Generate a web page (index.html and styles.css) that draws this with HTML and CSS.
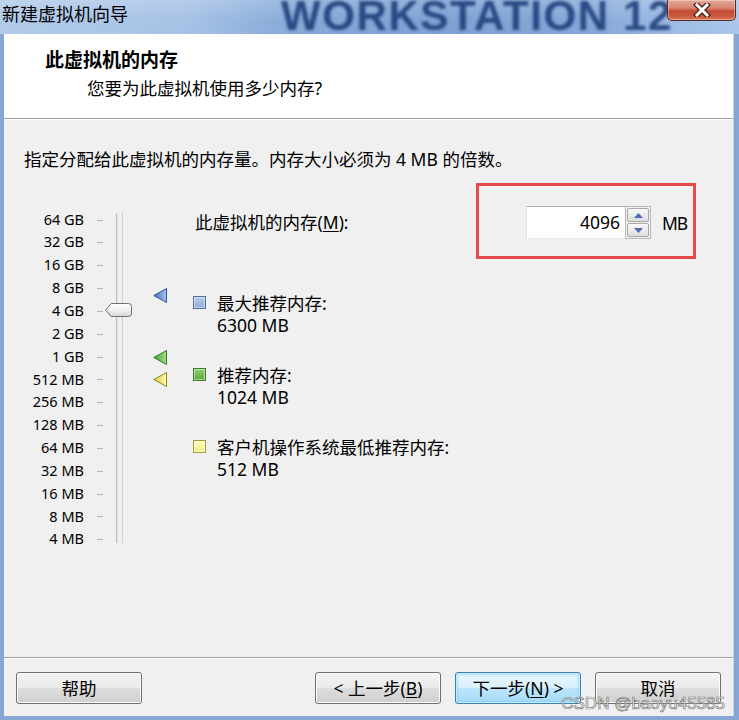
FILE: index.html
```html
<!DOCTYPE html>
<html lang="zh-CN">
<head>
<meta charset="utf-8">
<title>新建虚拟机向导</title>
<link rel="stylesheet" href="styles.css">
</head>
<body>
<div class="window">
  <div class="titlebar">
    <span class="title">新建虚拟机向导</span>
    <div class="brand" aria-hidden="true">WORKSTATION 12</div>
    <button class="close" aria-label="关闭">
      <svg width="18" height="14" viewBox="0 0 18 14">
        <path d="M4 2 L14 12 M14 2 L4 12" stroke="#4a1f1a" stroke-width="5.5" stroke-linecap="square"/>
        <path d="M4 2 L14 12 M14 2 L4 12" stroke="#ffffff" stroke-width="3" stroke-linecap="square"/>
      </svg>
    </button>
  </div>
  <div class="frame">
    <div class="client">
      <header class="wiz-head">
        <h1>此虚拟机的内存</h1>
        <p>您要为此虚拟机使用多少内存?</p>
      </header>
      <main class="wiz-body">
        <p class="intro">指定分配给此虚拟机的内存量。内存大小必须为 4 MB 的倍数。</p>
        <div class="mem-area">
          <ul class="scale">
            <li><span>64 GB</span><i></i></li>
            <li><span>32 GB</span><i></i></li>
            <li><span>16 GB</span><i></i></li>
            <li><span>8 GB</span><i></i></li>
            <li><span>4 GB</span><i></i></li>
            <li><span>2 GB</span><i></i></li>
            <li><span>1 GB</span><i></i></li>
            <li><span>512 MB</span><i></i></li>
            <li><span>256 MB</span><i></i></li>
            <li><span>128 MB</span><i></i></li>
            <li><span>64 MB</span><i></i></li>
            <li><span>32 MB</span><i></i></li>
            <li><span>16 MB</span><i></i></li>
            <li><span>8 MB</span><i></i></li>
            <li><span>4 MB</span><i></i></li>
          </ul>
          <div class="track">
            <svg class="thumb" width="27" height="14" viewBox="0 0 27 14">
              <defs>
                <linearGradient id="tg" x1="0" y1="0" x2="0" y2="1">
                  <stop offset="0" stop-color="#ffffff"/>
                  <stop offset="0.5" stop-color="#f0f0f0"/>
                  <stop offset="1" stop-color="#d6d6d6"/>
                </linearGradient>
              </defs>
              <path d="M0.7 7 L6.2 0.5 H23.5 Q26.5 0.5 26.5 3.5 V10.5 Q26.5 13.5 23.5 13.5 H6.2 Z" fill="url(#tg)" stroke="#6e6e6e" stroke-width="1"/>
            </svg>
          </div>
          <div class="markers">
            <svg class="mark mark-max" width="14" height="15" viewBox="0 0 14 15">
              <defs>
                <linearGradient id="gb" x1="0" y1="0" x2="1" y2="0">
                  <stop offset="0" stop-color="#3f6db4"/>
                  <stop offset="1" stop-color="#a9c3ea"/>
                </linearGradient>
              </defs>
              <polygon points="13.5,0.5 13.5,14.5 0.8,7.5" fill="url(#gb)" stroke="#2e5594" stroke-width="1"/>
            </svg>
            <svg class="mark mark-rec" width="14" height="15" viewBox="0 0 14 15">
              <defs>
                <linearGradient id="gg" x1="0" y1="0" x2="1" y2="0">
                  <stop offset="0" stop-color="#3d9e2c"/>
                  <stop offset="1" stop-color="#a8e08e"/>
                </linearGradient>
              </defs>
              <polygon points="13.5,0.5 13.5,14.5 0.8,7.5" fill="url(#gg)" stroke="#2d7a20" stroke-width="1"/>
            </svg>
            <svg class="mark mark-min" width="14" height="15" viewBox="0 0 14 15">
              <defs>
                <linearGradient id="gy" x1="0" y1="0" x2="1" y2="0">
                  <stop offset="0" stop-color="#d9cc34"/>
                  <stop offset="1" stop-color="#fffbb8"/>
                </linearGradient>
              </defs>
              <polygon points="13.5,0.5 13.5,14.5 0.8,7.5" fill="url(#gy)" stroke="#8e8520" stroke-width="1"/>
            </svg>
          </div>
          <div class="details">
            <div class="mem-row">
              <label class="mem-label">此虚拟机的内存(<u>M</u>):</label>
              <div class="highlight">
                <div class="spin">
                  <div class="spin-text">4096</div>
                  <div class="spin-btns">
                    <span class="spin-btn">
                      <svg width="9" height="5" viewBox="0 0 9 5"><polygon points="4.5,0 9,5 0,5" fill="#4d6cb3"/></svg>
                    </span>
                    <span class="spin-btn">
                      <svg width="9" height="5" viewBox="0 0 9 5"><polygon points="0,0 9,0 4.5,5" fill="#4d6cb3"/></svg>
                    </span>
                  </div>
                </div>
                <span class="unit">MB</span>
              </div>
            </div>
            <ul class="legend">
              <li><i class="sq sq-max"></i><div><div>最大推荐内存:</div><div>6300 MB</div></div></li>
              <li><i class="sq sq-rec"></i><div><div>推荐内存:</div><div>1024 MB</div></div></li>
              <li><i class="sq sq-min"></i><div><div>客户机操作系统最低推荐内存:</div><div>512 MB</div></div></li>
            </ul>
          </div>
        </div>
      </main>
      <footer class="wiz-foot">
        <button class="btn">帮助</button>
        <div class="nav">
          <button class="btn">&lt; 上一步(<u>B</u>)</button>
          <button class="btn btn-default">下一步(<u>N</u>) &gt;</button>
          <button class="btn">取消</button>
        </div>
      </footer>
    </div>
  </div>
  <div class="watermark">CSDN @baoyu45585</div>
</div>
</body>
</html>
```
FILE: styles.css
```css
* { box-sizing: border-box; }
html, body { margin: 0; padding: 0; }
body {
  width: 739px;
  height: 720px;
  overflow: hidden;
  background: #f0f0f0;
  font-family: "Noto Sans", "Noto Sans CJK SC", sans-serif;
  font-size: 17.5px;
  color: #000;
}
ul { list-style: none; margin: 0; padding: 0; }
p, h1 { margin: 0; }
u { text-decoration: underline; text-underline-offset: 2px; }

.window {
  position: relative;
  width: 739px;
  height: 720px;
  display: flex;
  flex-direction: column;
  background: #86a7d3;
}

/* title bar */
.titlebar {
  position: relative;
  height: 34px;
  flex: none;
  display: flex;
  align-items: flex-start;
  overflow: hidden;
  background:
    linear-gradient(180deg, rgba(255,255,255,0.18) 0%, rgba(255,255,255,0) 60%),
    linear-gradient(90deg, #b2cbea 0%, #a7c2e6 25%, #86a9d8 40%, #7da1d3 60%, #86a8d8 80%, #9fbde5 92%, #aac6ea 100%);
}
.title {
  position: relative;
  z-index: 1;
  font-size: 18px;
  line-height: 28px;
  padding-left: 2px;
  color: #000;
}
.brand {
  position: absolute;
  left: 281px;
  top: -8px;
  display: block;
  font: bold 42px "Liberation Sans", sans-serif;
  letter-spacing: 1.6px;
  line-height: 48px;
  color: transparent;
  text-shadow: 0 0 3px rgba(24, 56, 118, 0.85);
  white-space: nowrap;
}
.close {
  position: relative;
  z-index: 1;
  margin-left: auto;
  margin-right: 3px;
  width: 69px;
  height: 21px;
  padding: 0;
  border: 1px solid #5b2a25;
  border-top: none;
  border-radius: 0 0 5px 5px;
  background: linear-gradient(180deg, #e3a898 0%, #d98670 40%, #c24a33 55%, #c9593c 80%, #d77a5a 100%);
  box-shadow: inset 0 0 0 1px rgba(255,255,255,0.35);
  display: flex;
  align-items: center;
  justify-content: center;
}

/* frame + client */
.frame {
  flex: 1;
  display: flex;
  padding: 0 5px 4px 4px;
}
.client {
  flex: 1;
  display: flex;
  flex-direction: column;
  background: #f0f0f0;
  border-right: 1px solid #c9d3df;
}

.wiz-head {
  flex: none;
  height: 85px;
  background: #fff;
  border-bottom: 1px solid #a0a0a0;
  padding-top: 14px;
}
.wiz-head h1 {
  font-size: 19px;
  font-weight: bold;
  line-height: 24px;
  padding-left: 41px;
}
.wiz-head p {
  margin-top: 4px;
  line-height: 24px;
  padding-left: 83px;
}

.wiz-body {
  flex: 1;
  border-top: 1px solid #ffffff;
  padding: 27px 0 0 20px;
}
.intro { line-height: 24px; }

.mem-area {
  margin-top: 9px;
  display: flex;
  align-items: flex-start;
}

.scale {
  flex: none;
  padding-top: 27.6px;
}
.scale li {
  display: flex;
  align-items: center;
  height: 22.857px;
}
.scale span {
  width: 60px;
  text-align: right;
  font-size: 14.5px;
  line-height: 22.857px;
  white-space: nowrap;
}
.scale i {
  width: 6px;
  height: 1px;
  margin-left: 13px;
  margin-top: 2px;
  background: #b4b4b4;
}

.track {
  position: relative;
  flex: none;
  width: 7px;
  height: 330px;
  margin-top: 33px;
  margin-left: 13px;
  background: linear-gradient(90deg, #bdbdbd 0, #bdbdbd 1px, #e4e4e4 1px, #f4f4f4 4px, #e8e8e8 6px, #d0d0d0 6px);
}
.thumb {
  position: absolute;
  left: -11px;
  top: 90px;
}

.markers {
  position: relative;
  flex: none;
  width: 70px;
  align-self: stretch;
}
.mark { position: absolute; left: 30px; }
.mark-max { top: 108px; }
.mark-rec { top: 170px; }
.mark-min { top: 192px; }

.details {
  flex: 1;
  padding-right: 37px;
}
.mem-row {
  margin-top: 3px;
  display: flex;
  align-items: center;
  justify-content: space-between;
}
.mem-label { padding-left: 2px; }
.highlight {
  flex: none;
  width: 220px;
  display: flex;
  align-items: center;
  gap: 11px;
  border: 3px solid #e44b4d;
  padding: 20px 0 17px 47px;
}
.spin {
  flex: none;
  display: flex;
  height: 33px;
}
.spin-text {
  width: 99px;
  height: 33px;
  background: #fff;
  border: 1px solid;
  border-color: #abadb3 #e3e9ef #e3e9ef #e2e3ea;
  border-right: none;
  text-align: right;
  padding-right: 5px;
  line-height: 31px;
}
.spin-btns {
  width: 26px;
  height: 33px;
  display: flex;
  flex-direction: column;
  gap: 1px;
  padding: 1px;
  background: #f0f0f0;
  border: 1px solid #b9b9b9;
}
.spin-btn {
  flex: 1;
  display: flex;
  align-items: center;
  justify-content: center;
  border: 1px solid #a9a9a9;
  border-radius: 2px;
  background: linear-gradient(180deg, #f8f8f8 0%, #ececec 50%, #dcdcdc 100%);
}
.unit {
  line-height: 24px;
  letter-spacing: -1px;
  white-space: nowrap;
}

.legend {
  margin-top: 33px;
}
.legend li {
  display: flex;
  align-items: flex-start;
  gap: 11px;
  line-height: 22px;
  margin-bottom: 28px;
}
.sq {
  flex: none;
  width: 13px;
  height: 13px;
  margin-top: 4px;
  border: 1px solid;
  box-shadow: inset 0 0 0 1px rgba(255,255,255,0.45);
}
.sq-max { background: linear-gradient(#b9cbe6, #94aed6); border-color: #50709f; }
.sq-rec { background: linear-gradient(#8fd06c, #5aa840); border-color: #3a7d2a; }
.sq-min { background: linear-gradient(#fdfbc0, #f2ec84); border-color: #a39a3c; }

/* footer */
.wiz-foot {
  flex: none;
  display: flex;
  align-items: center;
  border-top: 1px solid #a0a0a0;
  box-shadow: inset 0 1px 0 #ffffff;
  padding: 14px 12px 12px 12px;
}
.nav {
  margin-left: auto;
  display: flex;
  gap: 14px;
}
.btn {
  width: 126px;
  height: 32px;
  padding: 0;
  font: inherit;
  color: #000;
  border: 1px solid #707070;
  border-radius: 3px;
  background: linear-gradient(180deg, #f2f2f2 0%, #ebebeb 50%, #dddddd 50%, #cfcfcf 100%);
  box-shadow: inset 0 0 0 1px #fbfbfb;
  line-height: 28px;
}
.btn-default {
  border-color: #3c7fb1;
  background: linear-gradient(180deg, #eaf6fd 0%, #d9f0fc 50%, #bee6fd 50%, #a7d9f5 100%);
  box-shadow: inset 0 0 0 1px #c3ecff, inset 0 0 2px 2px rgba(120,200,240,0.5);
}

.watermark {
  position: absolute;
  right: 14px;
  bottom: 6px;
  font: 17px "Liberation Sans", sans-serif;
  color: rgba(255,255,255,0.85);
  -webkit-text-stroke: 0.7px rgba(90,90,90,0.8);
  white-space: nowrap;
}
```
